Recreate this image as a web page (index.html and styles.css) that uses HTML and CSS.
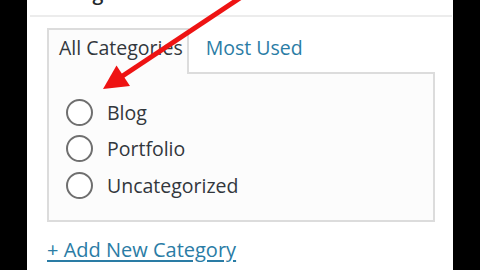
FILE: index.html
```html
<!DOCTYPE html>
<html>
<head>
<meta charset="utf-8">
<link rel="stylesheet" href="styles.css">
</head>
<body>
<div class="frame">
  <div class="head-title">Categories</div>
  <div class="head-rule"></div>
  <div class="tabs">
    <div class="tab active">All Categories</div>
    <div class="tab">Most Used</div>
  </div>
  <div class="panel">
    <ul class="cats">
      <li class="cat"><span class="radio"></span><span class="label">Blog</span></li>
      <li class="cat"><span class="radio"></span><span class="label">Portfolio</span></li>
      <li class="cat"><span class="radio"></span><span class="label">Uncategorized</span></li>
    </ul>
  </div>
  <a class="add-link" href="#">+ Add New Category</a>
</div>
<svg class="arrow" width="480" height="270" viewBox="0 0 480 270">
  <line x1="240" y1="-2" x2="121" y2="77" stroke="#ee1313" stroke-width="5"/>
  <polygon points="103,89 116.5,65.5 130,86" fill="#ee1313"/>
</svg>
</body>
</html>
```

FILE: styles.css
```css
html, body {
  margin: 0;
  padding: 0;
  background: #000;
  height: 270px;
  overflow: hidden;
}
body {
  position: relative;
  font-family: "Open Sans", "Liberation Sans", sans-serif;
}
.frame {
  width: 426px;
  height: 270px;
  margin: 0 auto;
  background: #fff;
  overflow: hidden;
  display: flex;
  flex-direction: column;
}
.head-title {
  margin-top: -17px;
  padding-left: 23px;
  font-size: 19.5px;
  line-height: 20px;
  font-weight: 600;
  color: #23282d;
}
.head-rule {
  margin: 12px 1px 0 3px;
  border-top: 2px solid #ececec;
}
.tabs {
  display: flex;
  margin: 11px 0 0 20px;
  position: relative;
  z-index: 1;
}
.tab {
  font-size: 19.5px;
  line-height: 36px;
  padding: 0 16px 6px 15px;
  color: #2a7ca5;
  border: 2px solid transparent;
  border-bottom: 0;
}
.tab.active {
  color: #32373c;
  padding: 0 4px 6px 10px;
  border-color: #dcdcdc;
  background: #fcfcfc;
  margin-bottom: -2px;
}
.panel {
  margin-left: 20px;
  width: 384px;
  border: 2px solid #dcdcdc;
  background: #fcfcfc;
}
.cats {
  list-style: none;
  margin: 0;
  padding: 20px 0 16px 17px;
}
.cat {
  display: flex;
  align-items: center;
  height: 36.5px;
  gap: 14px;
}
.radio {
  box-sizing: border-box;
  width: 27px;
  height: 27px;
  border: 2px solid #6f6f6f;
  border-radius: 50%;
  background: #fff;
}
.label {
  font-size: 19.5px;
  color: #32373c;
}
.add-link {
  align-self: flex-start;
  margin: 16px 0 0 20px;
  font-size: 20px;
  line-height: 24px;
  color: #2a7ca5;
  text-decoration: underline;
  text-decoration-thickness: 2px;
  text-underline-offset: 3px;
}
.arrow {
  position: absolute;
  left: 0;
  top: 0;
  z-index: 2;
  pointer-events: none;
}
```
